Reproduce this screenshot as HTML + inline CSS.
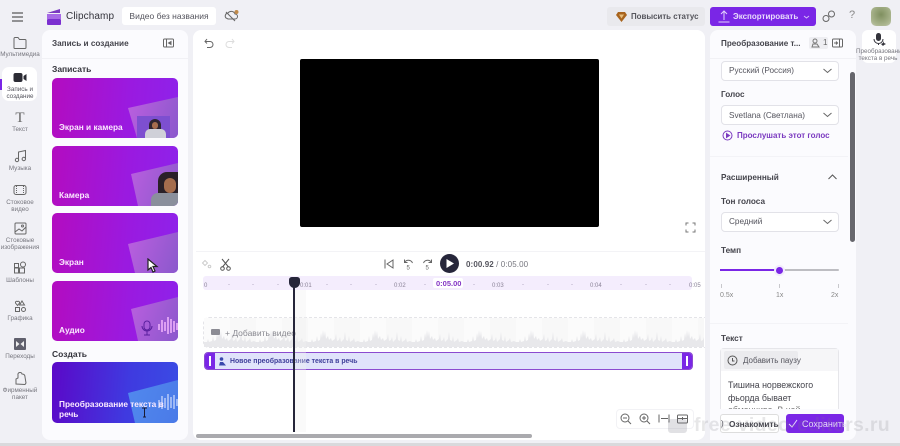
<!DOCTYPE html>
<html><head><meta charset="utf-8">
<style>
*{box-sizing:border-box}
html,body{margin:0;padding:0;background:#f0f0f5}
body{width:900px;height:446px;overflow:hidden;font-family:"Liberation Sans","Noto Sans CJK SC",sans-serif;color:#3a3a44}
#w{position:relative;width:900px;height:446px;overflow:hidden;background:#f0f0f5;filter:blur(.3px)}
.a{position:absolute}
.t{position:absolute;white-space:nowrap}
.nav{position:absolute;left:0;width:40px;text-align:center;font-size:6.300px;line-height:6.500px;color:#77777f}
.nav svg{display:block;margin:0 auto 2px}
.card{position:absolute;left:52px;width:126px;border-radius:5px;overflow:hidden;background:linear-gradient(95deg,#b30cc0 0%,#9a1ae0 60%,#8e22ea 100%)}
.card .lab{position:absolute;left:7px;color:#fbeaff;font-weight:bold;font-size:8.300px;white-space:nowrap}
.sheet{position:absolute;left:0;top:0;width:126px;height:61px;background:linear-gradient(110deg,#bd5fe0 55%,#8a58cc 100%)}
.sel{position:absolute;left:721px;width:118px;height:20px;background:#fff;border:1px solid #e2e2e8;border-radius:4px;font-size:8.200px;color:#55555e;line-height:18px;padding-left:7px}
.sel svg{position:absolute;right:6px;top:6px}
.lbl{position:absolute;font-size:8.200px;font-weight:bold;color:#44444c;white-space:nowrap}
.tk{position:absolute;top:283px;font-size:6px;color:#8b8498;white-space:nowrap}
.dot{position:absolute;top:283.500px;width:1.500px;height:1.500px;background:#d6cee2}
</style></head><body><div id="w">
<!-- top bar -->
<svg class="a" style="left:12px;top:12px" width="12" height="10"><path d="M0 1h11M0 5h11M0 9h11" stroke="#333" stroke-width="1.100"/></svg>
<svg class="a" style="left:46px;top:8px" width="16" height="17"><path d="M1 5 L14 1 V5 H1Z" fill="#7b3ac0"/><rect x="1" y="6" width="14" height="5" fill="#a76ae6"/><rect x="1" y="11" width="14" height="6" rx="1" fill="#7b2fd0"/></svg>
<div class="t" style="left:66px;top:11px;font-size:10px;color:#33333b;letter-spacing:.1px">Clipchamp</div>
<div class="a" style="left:122px;top:7px;width:94px;height:18px;background:#fff;border-radius:3px;font-size:8.500px;line-height:18px;text-align:center;color:#55555e">Видео без названия</div>
<svg class="a" style="left:224px;top:9px" width="16" height="14" fill="none" stroke="#666"><path d="M2 9a3 3 0 0 1 2-5 4 4 0 0 1 7 1 2.500 2.500 0 0 1 0 5H4ZM2 3l9 9"/><circle cx="12.500" cy="3" r="2" fill="#c08a4a" stroke="none"/></svg>
<div class="a" style="left:607px;top:7px;width:98px;height:19px;background:#e9e9ed;border-radius:3px"></div>
<svg class="a" style="left:616px;top:12px" width="11" height="10"><path d="M2 0h7l2 3-5.500 7L0 3Z" fill="#a8641e"/><path d="M3 2.500h5l-2.500 4Z" fill="#e6bd7c"/></svg>
<div class="t" style="left:631px;top:12px;font-size:7.900px;font-weight:bold;color:#55555c">Повысить статус</div>
<div class="a" style="left:710px;top:7px;width:106px;height:19px;background:#7a26e6;border-radius:3px"></div>
<svg class="a" style="left:718px;top:10px" width="12" height="13" fill="none" stroke="#e3d2fb"><path d="M6 10V1M3 4l3-3 3 3M0.500 12h11"/></svg>
<div class="t" style="left:733px;top:12px;font-size:8px;font-weight:bold;color:#e9dcfc">Экспортировать</div>
<svg class="a" style="left:803px;top:15px" width="7" height="4" fill="none" stroke="#d5bdf8"><path d="M1 1l2.500 2L6 1"/></svg>
<svg class="a" style="left:822px;top:10px" width="13" height="13" fill="none" stroke="#666"><circle cx="4" cy="8.500" r="3"/><circle cx="9.500" cy="4" r="3"/></svg>
<div class="t" style="left:849px;top:9px;font-size:11px;color:#888">?</div>
<div class="a" style="left:871px;top:7px;width:20px;height:19px;border-radius:5px;background:radial-gradient(circle at 50% 40%,#7f8f5f,#aab58e 70%,#c4c9b4)"></div>

<!-- nav -->
<div class="a" style="left:2px;top:67px;width:35px;height:34px;background:#fff;border-radius:7px"></div>
<div class="a" style="left:0;top:79px;width:2px;height:11px;background:#7a26e6"></div>
<div class="nav" style="top:36px"><svg width="14" height="13" fill="none" stroke="#666" style="margin-bottom:3px"><path d="M1 11.500V2.500a1 1 0 0 1 1-1h3l1.500 2H12a1 1 0 0 1 1 1v7a1 1 0 0 1-1 1H2a1 1 0 0 1-1-.5Z"/></svg>Мультимедиа</div>
<div class="nav" style="top:72px;color:#55555e"><svg width="14" height="11"><rect x="0.500" y="1" width="9" height="9" rx="2" fill="#2b2b34"/><path d="M10.500 4l3-2v7l-3-2Z" fill="#2b2b34"/></svg><span style="display:block;margin-top:4px">Запись и<br>создание</span></div>
<div class="nav" style="top:111px"><span style="display:block;font:15px/14px 'Liberation Serif',serif;color:#666;margin-bottom:2px">T</span>Текст</div>
<div class="nav" style="top:149px"><svg width="13" height="14" fill="none" stroke="#666" style="margin-bottom:3px"><path d="M4.500 11V3l7-1.500V10"/><circle cx="3" cy="11" r="1.700"/><circle cx="9.800" cy="10" r="1.700"/></svg>Музыка</div>
<div class="nav" style="top:184px"><svg width="14" height="12" fill="none" stroke="#666"><rect x="1" y="1.500" width="12" height="9" rx="2"/><path d="M3.500 2v8M10.500 2v8" stroke-dasharray="1 1"/></svg><span style="display:block;margin-top:4px">Стоковое<br>видео</span></div>
<div class="nav" style="top:222px"><svg width="13" height="13" fill="none" stroke="#666"><rect x="1" y="1" width="11" height="11" rx="1"/><path d="M1 10l4-3 3 2 4-4"/><circle cx="8.500" cy="4" r="1"/></svg><span style="display:block;margin-top:3px">Стоковые<br>изображения</span></div>
<div class="nav" style="top:261px"><svg width="14" height="13" fill="none" stroke="#666"><path d="M1.500 2.500h4v4h-4zM1.500 7h4v5h-4zM6.500 7h5v5h-5z"/><circle cx="10" cy="3.500" r="2.500"/></svg><span style="display:block;margin-top:4px">Шаблоны</span></div>
<div class="nav" style="top:300px"><svg width="13" height="12" fill="none" stroke="#666"><path d="M3.500 5.500 1.500 3a1.300 1.300 0 0 1 2-1.500 1.300 1.300 0 0 1 2 1.500ZM8 1l2.500 4h-5z"/><rect x="1.500" y="7.500" width="4" height="4"/><circle cx="9.500" cy="9.500" r="2"/></svg><span style="display:block;margin-top:4px">Графика</span></div>
<div class="nav" style="top:338px"><svg width="12" height="12"><rect width="12" height="12" rx="1" fill="#5f5f6c"/><path d="M2 3l3.500 3L2 9ZM10 3 6.500 6l3.500 3Z" fill="#eee"/></svg><span style="display:block;margin-top:4px">Переходы</span></div>
<div class="nav" style="top:372px"><svg width="13" height="14" fill="none" stroke="#666"><path d="M2 12V7l2-1V3a2 2 0 0 1 4-1c2 0 3 1 3 3l1 6-1 1.500Z"/></svg><span style="display:block;margin-top:2px">Фирменный<br>пакет</span></div>

<!-- left panel -->
<div class="a" style="left:42px;top:30px;width:146px;height:410px;background:#fbfbfe;border-radius:8px"></div>
<div class="a" style="left:42px;top:58px;width:146px;height:1px;background:#f1f1f5"></div>
<div class="t" style="left:52px;top:39px;font-size:8.200px;font-weight:bold;color:#44444c">Запись и создание</div>
<svg class="a" style="left:163px;top:38px" width="12" height="10" fill="none" stroke="#666"><rect x="0.500" y="1" width="10" height="8" rx="1"/><path d="M3.500 1v8"/><path d="M8 3.500 5.500 5 8 6.500Z" fill="#666"/></svg>
<div class="t" style="left:52px;top:64px;font-size:8.500px;font-weight:bold;color:#33333b">Записать</div>
<div class="card" style="top:78px;height:60px"><div class="sheet" style="clip-path:polygon(76px 30px,126px 19px,126px 60px,85px 60px)"></div><div class="a" style="left:85px;top:38px;width:33px;height:22px;background:#7d4fd0"></div><div class="a" style="left:97px;top:41px;width:12px;height:14px;background:#2f2530;border-radius:6px 6px 0 0"></div><div class="a" style="left:100px;top:44px;width:6px;height:7px;background:#a66d4d;border-radius:3px"></div><div class="a" style="left:93px;top:51px;width:21px;height:9px;background:#cfd0d8;border-radius:5px 5px 0 0"></div><div class="lab" style="top:44px">Экран и камера</div></div>
<div class="card" style="top:146px;height:60px"><div class="sheet" style="clip-path:polygon(79px 28px,126px 17px,126px 60px,86px 60px)"></div><div class="a" style="left:106px;top:26px;width:20px;height:24px;background:#2a2028;border-radius:9px 0 0 0"></div><div class="a" style="left:112px;top:32px;width:12px;height:15px;background:#a66d4d;border-radius:6px"></div><div class="a" style="left:99px;top:47px;width:27px;height:13px;background:#8a8f9c;border-radius:7px 0 0 0"></div><div class="lab" style="top:44px">Камера</div></div>
<div class="card" style="top:213px;height:60px"><div class="sheet" style="clip-path:polygon(76px 31px,126px 19px,126px 60px,83px 60px)"></div><svg class="a" style="left:94px;top:45px" width="14" height="15"><path d="M2 1v11l3-2.500 2 4.500 2-1-2-4.500h4Z" fill="#fff" stroke="#222" stroke-width="1.200"/></svg><div class="lab" style="top:44px">Экран</div></div>
<div class="card" style="top:281px;height:60px"><div class="sheet" style="clip-path:polygon(79px 28px,126px 16px,126px 60px,86px 60px)"></div><svg class="a" style="left:86px;top:36px" width="40" height="22" fill="none"><rect x="6" y="4" width="6" height="9" rx="3" stroke="#5a1f9e"/><path d="M4 9a5 5 0 0 0 10 0M9 14v4M6 18h6" stroke="#5a1f9e"/><path d="M21 7v6M24 3v12M27 5v9M30 0v17M33 2v14M36 4v11M39 6v7" stroke="#dc9ff2" stroke-width="2"/></svg><div class="lab" style="top:44px">Аудио</div></div>
<div class="t" style="left:52px;top:349px;font-size:8.500px;font-weight:bold;color:#33333b">Создать</div>
<div class="card" style="top:362px;height:61px;background:linear-gradient(95deg,#5b08c8 0%,#3f3ae0 60%,#3a4ce4 100%)"><div class="sheet" style="clip-path:polygon(76px 31px,126px 18px,126px 61px,83px 61px);background:linear-gradient(110deg,#5a9cf4,#4a7ae8)"></div><svg class="a" style="left:105px;top:30px" width="21" height="20" fill="none" stroke="#9db8f5" stroke-width="2"><path d="M2 8v8M5 4v13M8 6v10M11 2v16M14 5v11M17 3v14M20 7v7"/></svg><div class="lab" style="top:37px;line-height:10px">Преобразование текста в<br>речь</div><svg class="a" style="left:90px;top:45px" width="6" height="11" fill="none" stroke="#1a1a33"><path d="M0 1h5M2.500 1v9M1 10h3"/></svg></div>

<!-- centre panel -->
<div class="a" style="left:193px;top:30px;width:512px;height:410px;background:#fff;border-radius:8px"></div>
<svg class="a" style="left:204px;top:38px" width="10" height="11" fill="none" stroke="#666"><path d="M3 1 1 3.500 3 5.500M1 3.500h5a3 3 0 0 1 0 6H3"/></svg>
<svg class="a" style="left:225px;top:38px" width="10" height="11" fill="none" stroke="#ddd"><path d="M7 1l2 2.500-2 2M9 3.500H4a3 3 0 0 0 0 6h3"/></svg>
<div class="a" style="left:300px;top:59px;width:299px;height:168px;background:#000;border-radius:2px"></div>
<svg class="a" style="left:685px;top:222px" width="11" height="11" fill="none" stroke="#777"><path d="M1 3.500V1h2.500M7.500 1H10v2.500M10 7.500V10H7.500M3.500 10H1V7.500"/></svg>
<div class="a" style="left:196px;top:251px;width:509px;height:1px;background:#f3f3f6"></div>
<svg class="a" style="left:201px;top:259px" width="11" height="10" fill="none" stroke="#ccc"><path d="M4 1.500 6.500 4 4 6.500 1.500 4Z"/><circle cx="8.500" cy="7.500" r="1.300"/></svg>
<svg class="a" style="left:220px;top:258px" width="11" height="13" fill="none" stroke="#555"><path d="M2 1l6.500 8M9 1 2.500 9"/><circle cx="2.500" cy="10.500" r="1.800"/><circle cx="8.500" cy="10.500" r="1.800"/></svg>
<svg class="a" style="left:384px;top:259px" width="10" height="10" fill="none" stroke="#666"><path d="M1 0.500v9M9 1 3 5l6 4Z"/></svg>
<svg class="a" style="left:403px;top:258px" width="11" height="12" fill="none" stroke="#666"><path d="M1.500 4.500a4.500 4.500 0 0 1 8 .5M1.500 1.500v3h3"/><text x="3.500" y="11.500" font-size="6" fill="#666" stroke="none" font-family="Liberation Sans">5</text></svg>
<svg class="a" style="left:422px;top:258px" width="11" height="12" fill="none" stroke="#666"><path d="M9.500 4.500a4.500 4.500 0 0 0-8 .5M9.500 1.500v3h-3"/><text x="3.500" y="11.500" font-size="6" fill="#666" stroke="none" font-family="Liberation Sans">5</text></svg>
<div class="a" style="left:440px;top:254px;width:19px;height:19px;background:#26263a;border-radius:50%"></div>
<svg class="a" style="left:445px;top:258px" width="10" height="11"><path d="M1.500 1 9 5.500 1.500 10Z" fill="#fff"/></svg>
<div class="t" style="left:466px;top:260px;font-size:8px;letter-spacing:.1px;font-weight:bold;color:#55555e">0:00.92 <span style="font-weight:normal;color:#77777f">/ 0:05.00</span></div>

<div class="a" style="left:203px;top:276px;width:489px;height:14px;background:#f4edfd;border-radius:3px"></div>
<div class="tk" style="left:204px">0</div>
<div class="dot" style="left:228px"></div><div class="dot" style="left:252px"></div><div class="dot" style="left:277px"></div>
<div class="tk" style="left:300px">0:01</div>
<div class="dot" style="left:326px"></div><div class="dot" style="left:350px"></div><div class="dot" style="left:375px"></div>
<div class="tk" style="left:394px">0:02</div>
<div class="dot" style="left:424px"></div>
<div class="a" style="left:433px;top:278px;width:30px;height:10px;background:#fff;border-radius:2px"></div>
<div class="t" style="left:436px;top:279px;font-size:7.500px;color:#8436c4;font-weight:bold">0:05.00</div>
<div class="dot" style="left:473px"></div>
<div class="tk" style="left:492px">0:03</div>
<div class="dot" style="left:522px"></div><div class="dot" style="left:547px"></div><div class="dot" style="left:571px"></div>
<div class="tk" style="left:590px">0:04</div>
<div class="dot" style="left:620px"></div><div class="dot" style="left:645px"></div><div class="dot" style="left:669px"></div>
<div class="tk" style="left:689px">0:05</div>

<div class="a" style="left:203px;top:317px;width:502px;height:31px;border:1px dashed #e4e4e8;border-right:0;border-radius:6px 0 0 6px;background:#fff"></div>
<svg class="a" style="left:204px;top:318px" width="500" height="29">
<defs><pattern id="wv" x="0" y="0" width="52" height="29" patternUnits="userSpaceOnUse">
<rect width="26" height="29" fill="#fbfbfb"/><rect x="26" width="26" height="29" fill="#f8f8f8"/>
<path fill="#e8e8eb" d="M0 29V24L3 24 4 21 5 24 8 23 9 18 10 23 12 22 13 15 14 20 15 12 16 19 17 13 18 21 20 18 21 22 23 20 24 23 27 21 28 16 29 23 31 22 32 19 33 24 36 21 37 14 38 22 40 23 41 18 42 24 45 22 46 20 47 24 50 23 52 24V29Z"/></pattern></defs>
<rect width="500" height="29" fill="url(#wv)"/></svg>
<div class="a" style="left:211px;top:329px;width:9px;height:6px;background:#8c8c94;border-radius:1px"></div>
<div class="t" style="left:225px;top:328px;font-size:8.500px;color:#888890">+ Добавить видео</div>

<div class="a" style="left:204px;top:352px;width:489px;height:18px;background:#e0e3fb;border:1.500px solid #8c4bd0;border-radius:4px"></div>
<div class="a" style="left:205px;top:353px;width:10px;height:16px;background:#7a26e6;border-radius:3px 0 0 3px"></div>
<div class="a" style="left:209px;top:356px;width:2px;height:10px;background:#fff"></div>
<div class="a" style="left:682px;top:353px;width:10px;height:16px;background:#7a26e6;border-radius:0 3px 3px 0"></div>
<div class="a" style="left:686px;top:356px;width:2px;height:10px;background:#fff"></div>
<svg class="a" style="left:218px;top:357px" width="9" height="9" fill="#3a48ac"><circle cx="3.500" cy="2" r="1.800"/><path d="M1 8.500 2 5h3l3 3.500Z"/></svg>
<div class="t" style="left:230px;top:358px;font-size:6.900px;font-weight:bold;color:#3f3f9a">Новое преобразование текста в речь</div>

<div class="a" style="left:295px;top:290px;width:11px;height:142px;background:rgba(240,240,240,.35)"></div>
<div class="a" style="left:293px;top:282px;width:2px;height:150px;background:#26263a"></div>
<div class="a" style="left:289px;top:277px;width:11px;height:11px;background:#26263a;border-radius:3px 3px 6px 6px"></div>

<div class="a" style="left:616px;top:409px;width:78px;height:20px;border:1px solid #f2f2f5;border-radius:4px;background:#fff"></div>
<svg class="a" style="left:620px;top:413px" width="12" height="12" fill="none" stroke="#666"><circle cx="5" cy="5" r="4"/><path d="M8 8l3 3M3 5h4"/></svg>
<svg class="a" style="left:639px;top:413px" width="12" height="12" fill="none" stroke="#666"><circle cx="5" cy="5" r="4"/><path d="M8 8l3 3M3 5h4M5 3v4"/></svg>
<svg class="a" style="left:658px;top:414px" width="13" height="9" fill="none" stroke="#666"><path d="M1 0.500v8M11 0.500v8M3 4.500h7"/></svg>
<svg class="a" style="left:677px;top:414px" width="12" height="10" fill="none" stroke="#666"><rect x="0.500" y="1" width="10" height="8" rx="1"/><path d="M0.500 4.500h10M5.500 3v3"/></svg>
<div class="a" style="left:196px;top:434px;width:336px;height:4px;background:#aaaaae;border-radius:2px"></div>

<!-- right panel -->
<div class="a" style="left:710px;top:30px;width:146px;height:410px;background:#fbfbfe;border-radius:8px"></div>
<div class="a" style="left:710px;top:58px;width:146px;height:1px;background:#f1f1f5"></div>
<div class="t" style="left:721px;top:39px;font-size:8.100px;font-weight:bold;color:#44444c">Преобразование т...</div>
<div class="a" style="left:809px;top:37px;width:19px;height:12px;background:#eeeef2;border-radius:2px"></div>
<svg class="a" style="left:811px;top:38px" width="9" height="10" fill="none" stroke="#777"><circle cx="4" cy="3" r="2"/><path d="M1 9l1-3h4l2 3Z"/></svg>
<div class="t" style="left:823px;top:38px;font-size:8px;color:#666">1</div>
<svg class="a" style="left:832px;top:38px" width="11" height="10" fill="none" stroke="#666"><rect x="0.500" y="1" width="10" height="8" rx="1"/><path d="M7.500 1v8M2 5h3.500M4 3.500 5.500 5 4 6.500"/></svg>
<div class="a" style="left:850px;top:72px;width:5px;height:170px;background:#66666c;border-radius:3px"></div>
<div class="sel" style="top:61px">Русский (Россия)<svg width="9" height="6" fill="none" stroke="#666"><path d="M.5 1 4.500 4.500 8.500 1"/></svg></div>
<div class="lbl" style="left:721px;top:90px">Голос</div>
<div class="sel" style="top:105px;line-height:19px">Svetlana (Светлана)<svg width="9" height="6" fill="none" stroke="#666"><path d="M.5 1 4.500 4.500 8.500 1"/></svg></div>
<svg class="a" style="left:722px;top:130px" width="11" height="11" fill="none" stroke="#7b3ac0"><circle cx="5.500" cy="5.500" r="4.500"/><path d="M4.500 3.500 7.500 5.500 4.500 7.500Z" fill="#7b3ac0"/></svg>
<div class="t" style="left:737px;top:131px;font-size:8px;font-weight:bold;color:#7b3ac0">Прослушать этот голос</div>
<div class="a" style="left:710px;top:156px;width:138px;height:1px;background:#f3f3f7"></div>
<div class="lbl" style="left:721px;top:173px">Расширенный</div>
<svg class="a" style="left:828px;top:174px" width="9" height="6" fill="none" stroke="#555"><path d="M.5 5 4.500 1 8.500 5"/></svg>
<div class="lbl" style="left:721px;top:197px">Тон голоса</div>
<div class="sel" style="top:212px">Средний<svg width="9" height="6" fill="none" stroke="#666"><path d="M.5 1 4.500 4.500 8.500 1"/></svg></div>
<div class="lbl" style="left:721px;top:246px">Темп</div>
<div class="a" style="left:720px;top:269px;width:119px;height:2px;background:#bdbdc2;border-radius:1px"></div>
<div class="a" style="left:720px;top:269px;width:59px;height:2px;background:#7a26e6"></div>
<div class="a" style="left:774px;top:265px;width:11px;height:11px;background:#7a26e6;border:2px solid #f1ecfb;border-radius:50%"></div>
<div class="a" style="left:721px;top:284px;width:1px;height:4px;background:#c8c8cc"></div>
<div class="a" style="left:779px;top:284px;width:1px;height:4px;background:#c8c8cc"></div>
<div class="a" style="left:838px;top:284px;width:1px;height:4px;background:#c8c8cc"></div>
<div class="t" style="left:720px;top:292px;font-size:7px;color:#888">0.5x</div>
<div class="t" style="left:776px;top:292px;font-size:7px;color:#888">1x</div>
<div class="t" style="left:831px;top:292px;font-size:7px;color:#888">2x</div>
<div class="a" style="left:710px;top:323px;width:138px;height:1px;background:#f3f3f7"></div>
<div class="lbl" style="left:721px;top:334px">Текст</div>
<div class="a" style="left:720px;top:348px;width:119px;height:92px;background:#fff;border:1px solid #e6e6ea;border-bottom:0;border-radius:4px 4px 0 0"></div>
<div class="a" style="left:721px;top:349px;width:117px;height:22px;background:#f6f6f8"></div>
<div class="a" style="left:723.500px;top:351px;width:74px;height:18px;background:#ebebee;border-radius:2px"></div>
<svg class="a" style="left:727px;top:355px" width="11" height="11" fill="none" stroke="#555"><circle cx="5.500" cy="5.500" r="4.500"/><path d="M5.500 3v3h2"/></svg>
<div class="t" style="left:743px;top:356px;font-size:8px;color:#55555e">Добавить паузу</div>
<div class="t" style="left:728px;top:379px;font-size:8.800px;line-height:13px;color:#44444c">Тишина норвежского<br>фьорда бывает</div>
<div class="a" style="left:728px;top:405px;width:100px;height:4px;overflow:hidden"><div class="t" style="left:0;top:0;font-size:8.800px;color:#777">обманчива. В ней</div></div>

<!-- bottom actions and watermark -->
<div class="a" style="left:710px;top:409px;width:138px;height:31px;background:#fbfbfe"></div>
<div class="a" style="left:720px;top:414px;width:59px;height:19px;background:#fff;border:1px solid #ddd;border-radius:3px"></div>
<div class="t" style="left:721px;top:419px;font-size:8px;color:#55555e">)</div>
<div class="t" style="left:729px;top:419px;font-size:8.300px;font-weight:bold;color:#44444c">Ознакомить</div>
<div class="a" style="left:786px;top:414px;width:58px;height:19px;background:#7a26e6;border-radius:3px"></div>
<svg class="a" style="left:788px;top:419px" width="10" height="9" fill="none" stroke="#e6d8fb"><path d="M1 5l3 3 5-7"/></svg>
<div class="t" style="left:802px;top:419px;font-size:9px;color:#e9dcfc">Сохранить</div>
<div class="a" style="left:668px;top:419px;width:19px;height:14px;background:rgba(120,120,130,.22);border-radius:3px"></div>
<div class="t" style="left:694px;top:414px;font-size:19.500px;font-weight:bold;color:rgba(120,120,130,.18);letter-spacing:.3px">free-video-editors.ru</div>

<!-- right tab -->
<div class="a" style="left:862px;top:30px;width:34px;height:33px;background:#fff;border-radius:6px"></div>
<svg class="a" style="left:873px;top:33px" width="13" height="13"><rect x="3" y="0" width="5" height="8" rx="2.500" fill="#33333b"/><path d="M1 6a4.500 4.500 0 0 0 9 0M5.500 10v2" stroke="#33333b" fill="none"/><path d="M10 8l1 2 2 1-2 1-1 1-1-1-1-1 2-1Z" fill="#33333b"/></svg>
<div class="t" style="left:856px;top:49px;width:44px;font-size:6.300px;line-height:6.500px;text-align:center;color:#77777f">Преобразование<br>текста в речь</div>

<div class="a" style="left:0;top:443px;width:900px;height:3px;background:#d9d9dc"></div>
</div></body></html>
